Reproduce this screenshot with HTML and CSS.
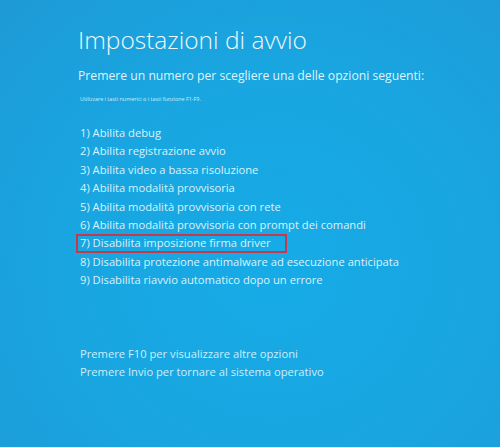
FILE: index.html
```html
<!DOCTYPE html>
<html lang="it">
<head>
    <meta charset="UTF-8">
    <meta name="viewport" content="width=device-width, initial-scale=1.0">
    <title>Impostazioni di avvio</title>
    <link rel="stylesheet" href="styles.css">
</head>
<body>
    <div class="screen">
        <h1 class="title">Impostazioni di avvio</h1>
        <p class="prompt">Premere un numero per scegliere una delle opzioni seguenti:</p>
        <p class="hint">Utilizzare i tasti numerici o i tasti funzione F1-F9.</p>

        <ul class="options">
            <li>1) Abilita debug</li>
            <li>2) Abilita registrazione avvio</li>
            <li>3) Abilita video a bassa risoluzione</li>
            <li>4) Abilita modalità provvisoria</li>
            <li>5) Abilita modalità provvisoria con rete</li>
            <li>6) Abilita modalità provvisoria con prompt dei comandi</li>
            <li class="selected">7) Disabilita imposizione firma driver</li>
            <li>8) Disabilita protezione antimalware ad esecuzione anticipata</li>
            <li>9) Disabilita riavvio automatico dopo un errore</li>
        </ul>

        <div class="footer">
            <p>Premere F10 per visualizzare altre opzioni</p>
            <p>Premere Invio per tornare al sistema operativo</p>
        </div>
    </div>
</body>
</html>
```

FILE: styles.css
```css
html, body {
    margin: 0;
    padding: 0;
    height: 100%;
}
body {
    font-family: 'Open Sans', 'Noto Sans', sans-serif;
    background: radial-gradient(ellipse at 55% 60%, #16abe7 0%, #19a5e0 55%, #1e9ad6 100%);
    color: #e4f4fb;
    overflow: hidden;
}
.screen {
    padding: 24px 0 0 78px;
}
.title {
    margin: 0;
    font-size: 24.5px;
    font-weight: 300;
    line-height: 32px;
    color: #eef8fc;
}
.prompt {
    margin: 12px 0 0;
    font-size: 12.2px;
    line-height: 16px;
    color: #dff3fb;
}
.hint {
    margin: 10px 0 0 2px;
    font-size: 5.4px;
    line-height: 10px;
    color: #d6eef8;
}
.options {
    list-style: none;
    margin: 20px 0 0;
    padding: 0;
}
.options li {
    font-size: 11.2px;
    line-height: 18.4px;
    padding-left: 2px;
    color: #dcf1fa;
}
/* red frame around the chosen entry; keeps the same row height */
.options li.selected {
    width: fit-content;
    margin-left: -2px;
    padding-right: 14px;
    line-height: 14.4px;
    border: 2px solid #c23a4c;
}
.footer {
    margin-top: 55px;
}
.footer p {
    margin: 0;
    font-size: 11.2px;
    line-height: 18.4px;
    padding-left: 2px;
    color: #cdeefb;
}
```
